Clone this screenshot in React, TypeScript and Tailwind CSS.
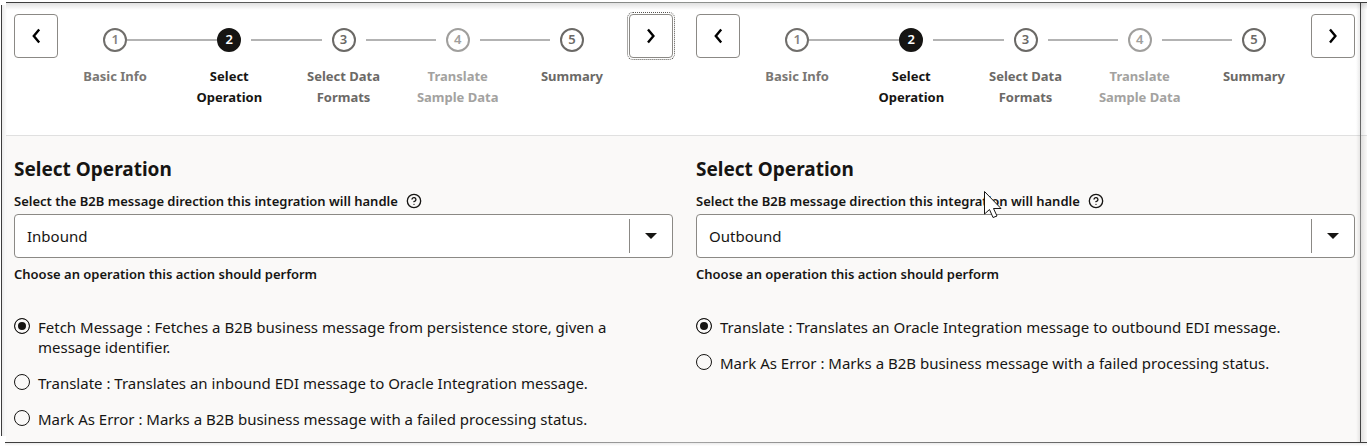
import { Fragment, useState } from 'react';
import { CircleHelp } from 'lucide-react';
import clsx from 'clsx';

interface Operation {
  name: string;
  description: string;
}

interface OperationPanelProps {
  id: string;
  direction: string;
  operations: Operation[];
}

interface StepperProps {
  nextFocused?: boolean;
}

type StepState = 'visited' | 'current' | 'next' | 'disabled';

const steps: { lines: string[]; state: StepState }[] = [
  { lines: ['Basic Info'], state: 'visited' },
  { lines: ['Select', 'Operation'], state: 'current' },
  { lines: ['Select Data', 'Formats'], state: 'next' },
  { lines: ['Translate', 'Sample Data'], state: 'disabled' },
  { lines: ['Summary'], state: 'next' },
];

const circleStyles: Record<StepState, string> = {
  visited: 'border-[#706e6b] text-[#85827e]',
  current: 'border-[#161513] bg-[#161513] text-white',
  next: 'border-[#6b6966] text-[#6b6966]',
  disabled: 'border-[#a09f9d] text-[#a09f9d]',
};

const labelStyles: Record<StepState, string> = {
  visited: 'text-[#7a7774]',
  current: 'text-[#161513]',
  next: 'text-[#6b6966]',
  disabled: 'text-[#a3a2a0]',
};

function Chevron({ d }: { d: string }) {
  return (
    <svg viewBox="0 0 24 24" className="w-6 h-6" fill="none" stroke="currentColor" strokeWidth="2.4">
      <path d={d} />
    </svg>
  );
}

function Stepper({ nextFocused }: StepperProps) {
  const buttonClass =
    'w-11 h-11 shrink-0 flex items-center justify-center rounded border border-[#8b8985] bg-white text-black';

  return (
    <div className="flex items-start">
      <button type="button" aria-label="Previous step" className={buttonClass}>
        <Chevron d="M15.2 5.5 9.8 12l5.4 6.5" />
      </button>
      <ol className="flex flex-1 pt-[14px]">
        {steps.map((step, index) => (
          <li key={index} className="flex-1">
            <div className="flex items-center">
              <span className="flex-1">
                {index > 0 && (
                  <span className={clsx('block h-[2px] bg-[#b3b3b3]', index > 1 && 'mr-[10px]')} />
                )}
              </span>
              <span
                className={clsx(
                  'w-6 h-6 flex items-center justify-center rounded-full border-2 text-[13px] font-semibold',
                  circleStyles[step.state]
                )}
              >
                {index + 1}
              </span>
              <span className="flex-1">
                {index < steps.length - 1 && (
                  <span className={clsx('block h-[2px] bg-[#b3b3b3]', index > 0 && 'ml-[10px]')} />
                )}
              </span>
            </div>
            <div
              className={clsx(
                'mt-[14px] text-center text-[13px] leading-[21px] font-bold',
                labelStyles[step.state]
              )}
            >
              {step.lines.map((line, i) => (
                <Fragment key={line}>
                  {i > 0 && <br />}
                  {line}
                </Fragment>
              ))}
            </div>
          </li>
        ))}
      </ol>
      <button
        type="button"
        aria-label="Next step"
        className={clsx(buttonClass, nextFocused && 'outline-1 outline-dotted outline-offset-1 outline-[#55534f]')}
      >
        <Chevron d="M9 5.5 14.4 12 9 18.5" />
      </button>
    </div>
  );
}

function OperationPanel({ id, direction, operations }: OperationPanelProps) {
  const [selected, setSelected] = useState(operations[0].name);

  return (
    <section>
      <h2 className="text-[19px] leading-7 font-bold">Select Operation</h2>

      <div className="mt-2 flex items-center gap-2">
        <label htmlFor={`${id}-direction`} className="text-[13px] leading-5 font-semibold">
          Select the B2B message direction this integration will handle
        </label>
        <button type="button" aria-label="Help">
          <CircleHelp className="w-4 h-4" />
        </button>
      </div>

      <div className="relative mt-[3px]">
        <select
          id={`${id}-direction`}
          defaultValue={direction}
          className="block w-full h-11 pl-3 pr-12 appearance-none rounded border border-[#8b8985] bg-white text-[15px]"
        >
          <option>Inbound</option>
          <option>Outbound</option>
        </select>
        <span className="absolute right-0 inset-y-[5px] w-11 pr-[2px] flex items-center justify-center border-l border-[#8b8985] pointer-events-none">
          <svg viewBox="0 0 12 6" className="w-3 h-[6px]" fill="currentColor">
            <path d="M0 0h12L6 6z" />
          </svg>
        </span>
      </div>

      <fieldset>
        <legend className="pt-[6px] text-[13px] leading-5 font-semibold">
          Choose an operation this action should perform
        </legend>
        <div className="mt-[33px] space-y-4">
          {operations.map((operation) => (
            <label key={operation.name} className="flex items-start gap-2 text-[15px] leading-5">
              <input
                type="radio"
                name={`${id}-operation`}
                checked={selected === operation.name}
                onChange={() => setSelected(operation.name)}
                className="mt-px w-4 h-4 shrink-0 appearance-none rounded-full border border-[#161513] checked:bg-[#161513] checked:shadow-[inset_0_0_0_3px_#faf9f8]"
              />
              <span>{`${operation.name} : ${operation.description}`}</span>
            </label>
          ))}
        </div>
      </fieldset>
    </section>
  );
}

// Thin lines with soft shadows round the whole page
function Frame() {
  return (
    <div className="absolute inset-0 pointer-events-none">
      <div className="absolute top-[2px] left-[6px] right-0 h-px bg-linear-to-r from-[#3d3d3d] via-[#8f928f] to-[#3d3d3d]" />
      <div className="absolute top-[3px] left-[6px] right-0 h-[7px] bg-linear-to-b from-black/12 to-transparent" />
      <div className="absolute top-[5px] bottom-[10px] left-px w-px bg-[#3d3d3d]" />
      <div className="absolute top-[5px] bottom-[10px] left-[2px] w-[5px] bg-linear-to-r from-black/8 to-transparent" />
      <div className="absolute top-[3px] bottom-[3px] right-[6px] w-px bg-linear-to-b from-[#3d3d3d] via-[#8a8a8a] to-[#3d3d3d]" />
      <div className="absolute top-[3px] bottom-[3px] right-0 w-[6px] bg-linear-to-r from-black/10 to-transparent" />
      <div className="absolute top-[3px] bottom-[3px] right-[7px] w-[4px] bg-linear-to-l from-black/8 to-transparent" />
      <div className="absolute bottom-[3px] left-[5px] right-0 h-px bg-linear-to-r from-[#3d3d3d] via-[#a3a3a3] to-[#3d3d3d]" />
      <div className="absolute bottom-0 left-[5px] right-0 h-[3px] bg-linear-to-b from-black/8 to-transparent" />
    </div>
  );
}

export default function App() {
  return (
    <div className="relative min-h-screen flex flex-col bg-white pl-[6px] pb-[3px] font-['Noto_Sans','Open_Sans',sans-serif] text-[#161513]">
      <header className="grid grid-cols-2 gap-[23px] pl-2 pr-3 pt-[14px] pb-[27px] border-b border-[#e0e0e0]">
        <Stepper nextFocused />
        <Stepper />
      </header>

      <main className="flex-1 grid grid-cols-2 gap-[23px] pl-2 pr-3 pt-[19px] pb-3 bg-[#faf9f8]">
        <OperationPanel
          id="inbound"
          direction="Inbound"
          operations={[
            {
              name: 'Fetch Message',
              description:
                'Fetches a B2B business message from persistence store, given a message identifier.',
            },
            {
              name: 'Translate',
              description: 'Translates an inbound EDI message to Oracle Integration message.',
            },
            {
              name: 'Mark As Error',
              description: 'Marks a B2B business message with a failed processing status.',
            },
          ]}
        />
        <OperationPanel
          id="outbound"
          direction="Outbound"
          operations={[
            {
              name: 'Translate',
              description: 'Translates an Oracle Integration message to outbound EDI message.',
            },
            {
              name: 'Mark As Error',
              description: 'Marks a B2B business message with a failed processing status.',
            },
          ]}
        />
      </main>

      <Frame />

      {/* Mouse pointer */}
      <svg
        viewBox="0 0 20 30"
        className="absolute left-[983px] top-[190px] w-5 h-[30px] pointer-events-none"
        fill="white"
        stroke="#161513"
      >
        <path d="M1.5 1.5v22.5l5-4.5 3.5 8 4-1.5-3.5-7.5h7.5z" />
      </svg>
    </div>
  );
}
